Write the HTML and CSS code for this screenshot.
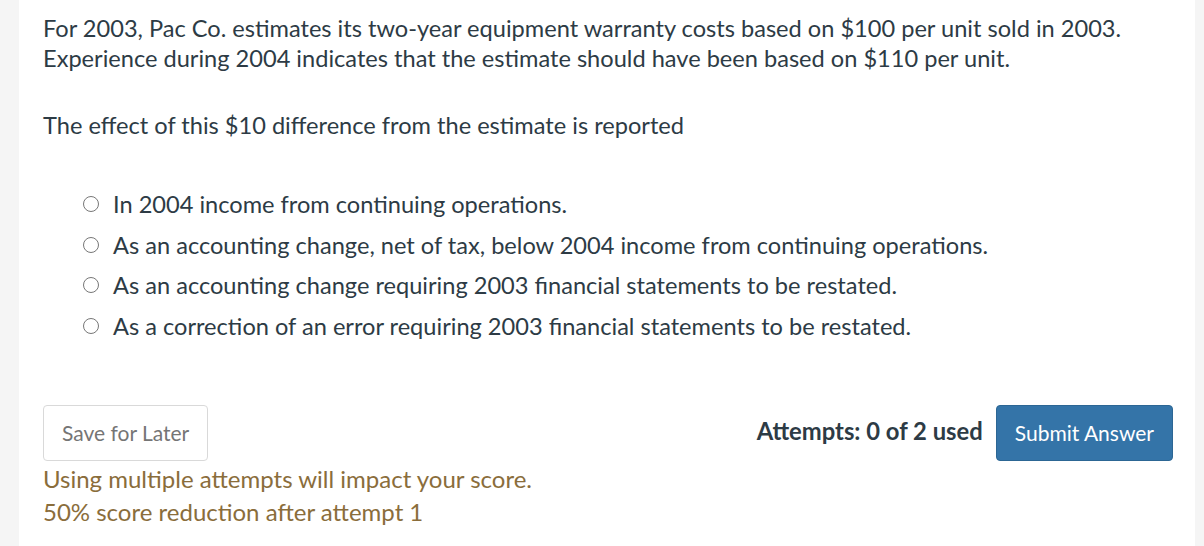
FILE: index.html
```html
<!DOCTYPE html>
<html>
<head>
<meta charset="utf-8">
<link rel="stylesheet" href="styles.css">
</head>
<body>
<div class="page">
  <div class="panel">
    <div class="question">
      <p class="stem">For 2003, Pac Co. estimates its two-year equipment warranty costs based on $100 per unit sold in 2003. Experience during 2004 indicates that the estimate should have been based on $110 per unit.</p>
      <p class="stem ask">The effect of this $10 difference from the estimate is reported</p>
      <ul class="answers">
        <li class="answer"><span class="radio"></span><span>In 2004 income from continuing operations.</span></li>
        <li class="answer"><span class="radio"></span><span>As an accounting change, net of tax, below 2004 income from continuing operations.</span></li>
        <li class="answer"><span class="radio"></span><span>As an accounting change requiring 2003 financial statements to be restated.</span></li>
        <li class="answer"><span class="radio"></span><span>As a correction of an error requiring 2003 financial statements to be restated.</span></li>
      </ul>
    </div>
    <div class="footer">
      <div class="left">
        <button class="btn">Save for Later</button>
        <div class="warning">Using multiple attempts will impact your score.<br>50% score reduction after attempt 1</div>
      </div>
      <div class="right">
        <span class="attempts">Attempts: 0 of 2 used</span>
        <button class="btn primary">Submit Answer</button>
      </div>
    </div>
  </div>
</div>
</body>
</html>
```

FILE: styles.css
```css
html, body {
  margin: 0;
  padding: 0;
}
body {
  background: #f5f5f5;
  font-family: Lato, "Open Sans", sans-serif;
  color: #2d3b45;
}
.page {
  padding: 0 9px 0 19px;
  height: 546px;
  box-sizing: border-box;
}
.panel {
  background: #fff;
  height: 100%;
  padding: 13px 22px 0 24px;
  box-sizing: border-box;
}
.stem {
  margin: 0;
  font-size: 23.6px;
  line-height: 30px;
}
.ask {
  margin-top: 37px;
}
.answers {
  list-style: none;
  margin: 44px 0 0 0;
  padding: 0 0 0 40px;
}
.answer {
  display: flex;
  align-items: center;
  font-size: 23.6px;
  line-height: 30px;
  padding: 5px 0 5.7px;
  gap: 14px;
}
.radio {
  width: 16px;
  height: 16px;
  border: 1.5px solid #777;
  border-radius: 50%;
  box-sizing: border-box;
  flex: none;
}
.footer {
  display: flex;
  justify-content: space-between;
  align-items: flex-start;
  margin-top: 58px;
}
.btn {
  font-family: Lato, "Open Sans", sans-serif;
  font-size: 21px;
  height: 56px;
  padding: 0 18px;
  background: #fff;
  color: #757575;
  border: 1px solid #d9d9d9;
  border-radius: 4px;
}
.warning {
  color: #8a6d3b;
  font-size: 24px;
  line-height: 33px;
  margin-top: 1px;
}
.right {
  display: flex;
  align-items: center;
  gap: 13px;
}
.attempts {
  font-weight: bold;
  font-size: 23.8px;
  margin-top: -4px;
}
.primary {
  background: #3474a8;
  border-color: #2c6694;
  color: #fff;
}
```
